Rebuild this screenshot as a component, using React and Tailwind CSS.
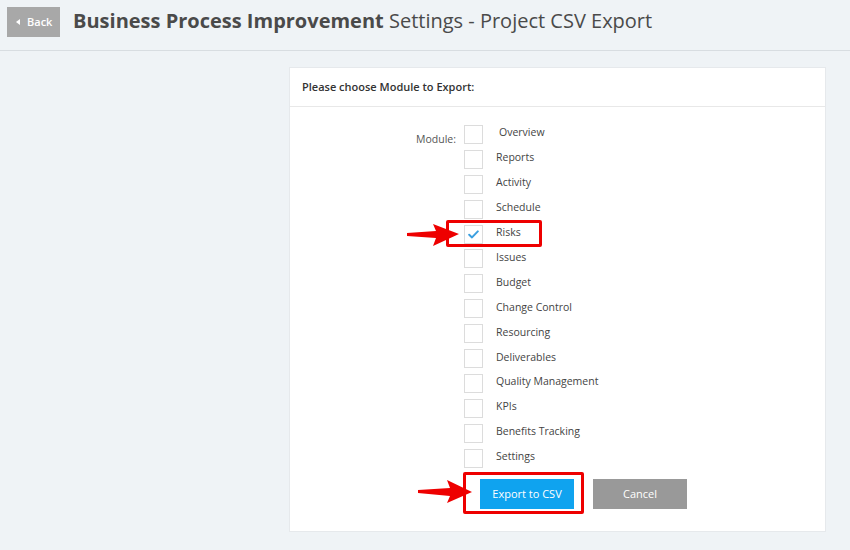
import React from "react";

const modules = [
  "Overview",
  "Reports",
  "Activity",
  "Schedule",
  "Risks",
  "Issues",
  "Budget",
  "Change Control",
  "Resourcing",
  "Deliverables",
  "Quality Management",
  "KPIs",
  "Benefits Tracking",
  "Settings",
];

function Checkbox({ checked }) {
  return (
    <div className="w-[19px] h-[19px] border border-[#dcdcdc] bg-white flex items-center justify-center shrink-0">
      {checked && (
        <svg width="11" height="9" viewBox="0 0 11 9">
          <path d="M1.2 4.8 L4 7.4 L9.8 1.4" fill="none" stroke="#3a9fe0" strokeWidth="2" strokeLinecap="round" strokeLinejoin="round" />
        </svg>
      )}
    </div>
  );
}

export default function App() {
  return (
    <div className="relative w-[850px] h-[550px] bg-[#eff3f6] overflow-hidden" style={{ fontFamily: '"Open Sans", sans-serif' }}>
      <div className="flex items-center h-[51px] pl-[7px] border-b border-[#d8dde1]">
        <div className="mt-[-6px] flex items-center gap-[7px] w-[53px] h-[30px] bg-[#a8a8a8] pl-[9px] text-white text-[11px] font-semibold">
          <svg width="4" height="6" viewBox="0 0 4 6"><path d="M4 0 L0 3 L4 6 Z" fill="white" /></svg>
          <span>Back</span>
        </div>
        <div className="mt-[-9px] ml-[13px] text-[20px] text-[#4a4a4a] leading-none">
          <span className="font-bold">Business Process Improvement</span> Settings - Project CSV Export
        </div>
      </div>

      <div className="flex justify-end pr-[24px] pt-[16px]">
        <div className="w-[537px] h-[465px] bg-white border border-[#e6e9ec]">
          <div className="h-[39px] flex items-center pl-[12px] border-b border-[#e8e8e8] text-[11px] font-semibold text-[#333]">
            Please choose Module to Export:
          </div>
          <div className="flex pt-[15px]">
            <div className="w-[174px] text-right pr-[8px] pt-[10px] text-[10.5px] text-[#555]">Module:</div>
            <div className="flex flex-col">
              {modules.map((m, i) => (
                <div key={m} className="flex items-center h-[24.9px]">
                  <Checkbox checked={m === "Risks"} />
                  <span className={`${i === 0 ? "ml-[16px] mt-[-3px]" : "ml-[13px] mt-[-2px]"} text-[10.5px] text-[#444]`}>{m}</span>
                </div>
              ))}
            </div>
          </div>
          <div className="flex pl-[190px] pt-[9px] gap-[19px]">
            <div className="w-[94px] h-[30px] bg-[#0fa3ef] text-white text-[11px] flex items-center justify-center">Export to CSV</div>
            <div className="w-[94px] h-[30px] bg-[#999999] text-white text-[11px] flex items-center justify-center">Cancel</div>
          </div>
        </div>
      </div>

      {/* annotations */}
      <div className="absolute left-[446px] top-[220px] w-[96px] h-[27px] border-[3px] border-[#ee0000] rounded-[2px]" />
      <div className="absolute left-[463px] top-[472px] w-[121px] h-[42px] border-[3px] border-[#ee0000] rounded-[2px]" />
      <svg className="absolute left-0 top-0" width="850" height="550" viewBox="0 0 850 550">
        <polygon points="407,233 436,231 433,224 459,234 433,246 436,238 407,236" fill="#ee0000" />
        <polygon points="418,490 450,488 447,480 472,492 447,503 450,496 418,493" fill="#ee0000" />
      </svg>
    </div>
  );
}
